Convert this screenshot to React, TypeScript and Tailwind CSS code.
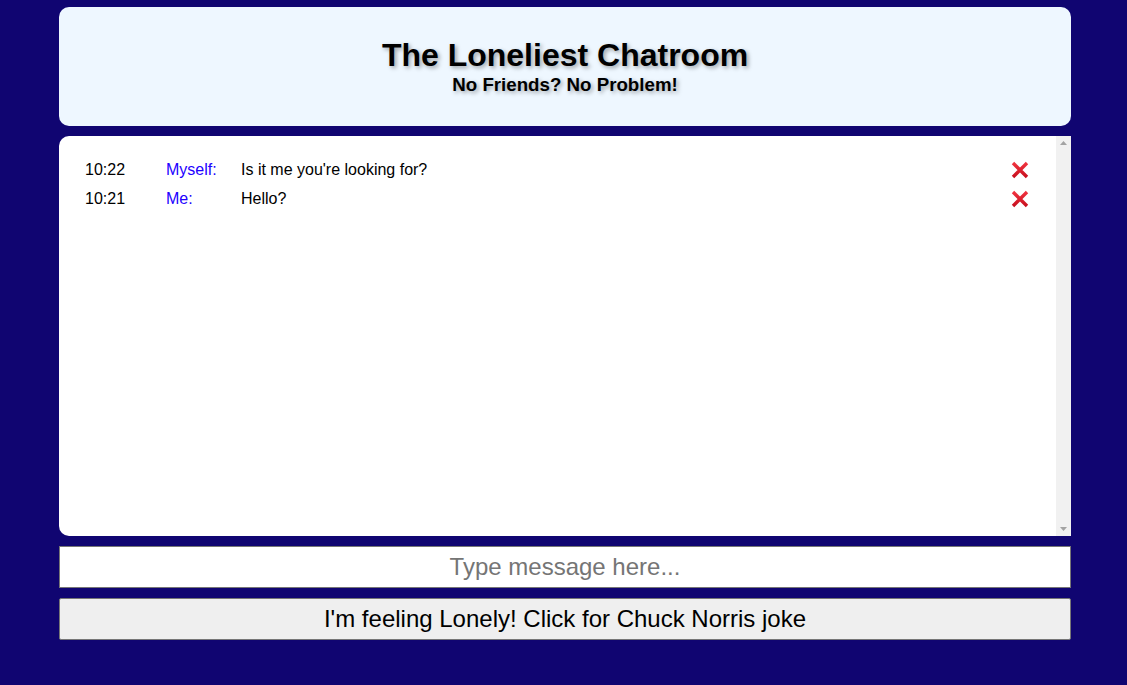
const MESSAGES = [
  { id: 2, time: "10:22", name: "Myself:", text: "Is it me you're looking for?" },
  { id: 1, time: "10:21", name: "Me:", text: "Hello?" },
];

function CrossMark() {
  return (
    <svg width="20" height="20" viewBox="0 0 20 20">
      <defs>
        <linearGradient id="xg" x1="0" y1="0" x2="0" y2="1">
          <stop offset="0" stopColor="#f0333f" />
          <stop offset="1" stopColor="#c8101f" />
        </linearGradient>
      </defs>
      <path d="M3 3 L17 17 M17 3 L3 17" stroke="url(#xg)" strokeWidth="3.4" strokeLinecap="butt" />
    </svg>
  );
}

function Scrollbar() {
  return (
    <div className="w-[15px] bg-[#f1f1f1] flex flex-col justify-between items-center py-[5px]">
      <svg width="7" height="4" viewBox="0 0 7 4">
        <path d="M0 4 L3.5 0 L7 4 Z" fill="#a3a3a3" />
      </svg>
      <svg width="7" height="4" viewBox="0 0 7 4">
        <path d="M0 0 L7 0 L3.5 4 Z" fill="#a3a3a3" />
      </svg>
    </div>
  );
}

export default function App() {
  return (
    <div className="min-h-[685px] bg-[#100571] font-['Liberation_Sans',Arial,sans-serif] pt-[7px]">
      <div className="ml-[59px] w-[1012px] flex flex-col">
        {/* Header */}
        <header className="h-[119px] rounded-[10px] bg-[#eef7ff] flex flex-col items-center pt-[29px]">
          <h1 className="text-[32px] leading-[38px] font-bold text-black [text-shadow:2px_2px_4px_rgba(0,0,0,0.35)]">
            The Loneliest Chatroom
          </h1>
          <h2 className="text-[18.72px] leading-[22px] font-bold text-black [text-shadow:2px_2px_4px_rgba(0,0,0,0.35)]">
            No Friends? No Problem!
          </h2>
        </header>

        {/* Messages */}
        <div className="mt-[10px] h-[400px] flex">
          <div className="flex-1 bg-white rounded-l-[10px] pt-[19px] pl-[26px] pr-[26px]">
            {MESSAGES.map((m) => (
              <div key={m.id} className="flex items-center h-[29px] text-[16px] text-black">
                <span className="w-[81px]">{m.time}</span>
                <span className="w-[75px] text-[#2200ff]">{m.name}</span>
                <span className="flex-1">{m.text}</span>
                <button className="w-[20px] h-[20px] flex items-center justify-center">
                  <CrossMark />
                </button>
              </div>
            ))}
          </div>
          <Scrollbar />
        </div>

        {/* Input */}
        <input
          type="text"
          placeholder="Type message here..."
          className="mt-[10px] h-[42px] w-full bg-white border border-[#767676] text-center text-[24px] text-black placeholder:text-[#757575] outline-none"
        />

        <button className="mt-[10px] h-[42px] w-full bg-[#efefef] border border-[#767676] rounded-[2px] text-[24px] text-black">
          I'm feeling Lonely! Click for Chuck Norris joke
        </button>
      </div>
    </div>
  );
}
